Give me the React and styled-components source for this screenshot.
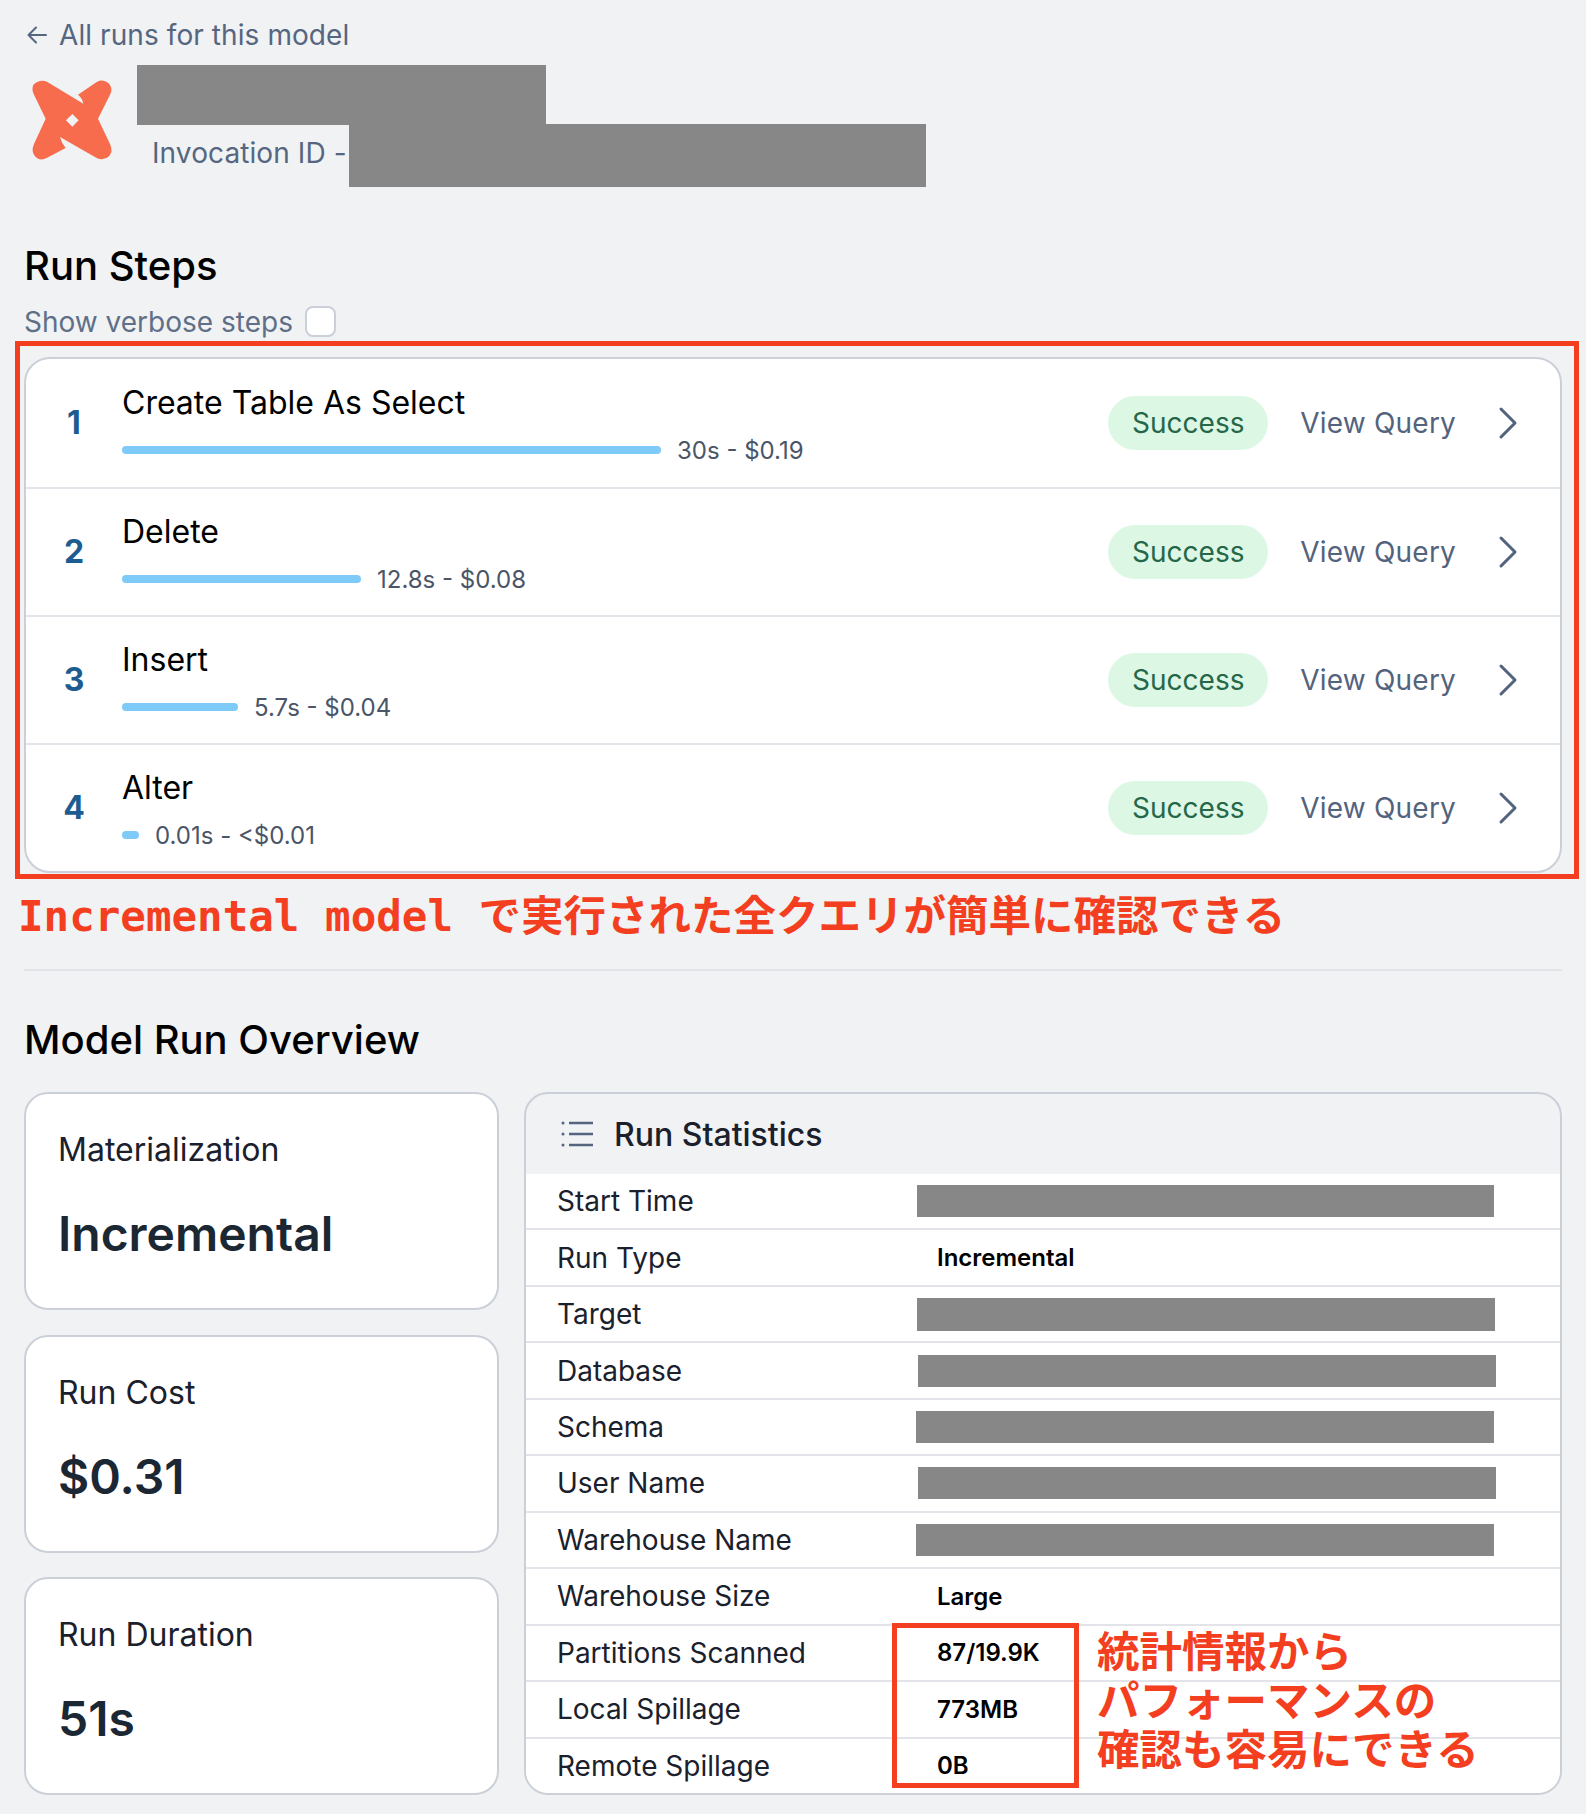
import styled, { createGlobalStyle } from "styled-components"
import { ChevronRight } from "lucide-react"

const GlobalStyle = createGlobalStyle`
    * { box-sizing: border-box; }
    body {
        margin: 0;
        background: #f0f2f4;
        font-family: "Inter", "Noto Sans CJK JP", sans-serif;
    }
`
const Page = styled.div`
    width: 1586px;
    height: 1814px;
    padding: 18px 24px 0 24px;
    background: #f0f2f4;
`
const BackLink = styled.a`
    display: flex;
    align-items: center;
    gap: 12px;
    height: 34px;
    padding-left: 3px;
    font-size: 28px;
    line-height: 34px;
    letter-spacing: 0.08px;
    color: #566680;
`
const Header = styled.div`
    display: flex;
    gap: 17px;
    margin-top: 13px;
`
const LogoMark = styled.svg`
    flex: none;
    width: 96px;
    height: 96px;
    margin-top: 7px;
    fill: #f76c4d;
`
const HeaderText = styled.div`
    display: flex;
    flex-direction: column;
`
const Redact = styled.div`
    flex: none;
    background: #878787;
    width: ${(props) => props.$w}px;
    height: ${(props) => props.$h}px;
    margin-left: ${(props) => props.$x || 0}px;
`
const InvocationRow = styled.div`
    display: flex;
    align-items: center;
    margin-top: -1px;
`
const Invocation = styled.span`
    width: 212px;
    margin-top: -5px;
    padding-left: 15px;
    font-size: 28px;
    letter-spacing: 0.1px;
    white-space: nowrap;
    color: #566680;
`
const SectionTitle = styled.h2`
    margin: ${(props) => props.$top}px 0 0;
    font-size: 40px;
    line-height: 44px;
    font-weight: 500;
    color: #000;
`
const VerboseRow = styled.label`
    display: flex;
    align-items: center;
    gap: 13px;
    height: 31px;
    margin-top: 18px;
    font-size: 28px;
    color: #5f6f88;
`
const CheckBox = styled.span`
    width: 31px;
    height: 31px;
    margin-left: -1px;
    background: #fff;
    border: 2px solid #cbd0d8;
    border-radius: 8px;
`
const StepsWrap = styled.div`
    position: relative;
    margin-top: 20px;
`
const RedBox = styled.div`
    position: absolute;
    border: 5px solid #f33f1f;
    top: ${(props) => props.$top}px;
    left: ${(props) => props.$left}px;
    right: ${(props) => props.$right}px;
    bottom: ${(props) => props.$bottom}px;
`
const StepsCard = styled.div`
    background: #fff;
    border: 2px solid #cbd0d8;
    border-radius: 26px;
    overflow: hidden;
`
const StepRow = styled.div`
    display: flex;
    align-items: center;
    height: 128px;
    padding-bottom: 1px;
    border-bottom: 2px solid #e2e4ea;
    &:first-child { height: 130px; }
    &:last-child { height: 126px; border-bottom: none; }
`
const StepNumber = styled.div`
    flex: none;
    width: 96px;
    text-align: center;
    font-size: 32px;
    font-weight: 700;
    color: #1d5c91;
`
const StepMain = styled.div`
    flex: 1;
    min-width: 0;
    padding-top: 4px;
`
const StepName = styled.div`
    font-size: 32px;
    line-height: 40px;
    color: #000;
`
const StepMeta = styled.div`
    display: flex;
    align-items: center;
    gap: 16px;
    height: 32px;
    margin-top: 11px;
    font-size: 24px;
    color: #4a5568;
`
const Bar = styled.div`
    height: 8px;
    border-radius: 4px;
    background: #7ecaf8;
`
const Badge = styled.span`
    display: flex;
    align-items: center;
    justify-content: center;
    width: 160px;
    height: 54px;
    border-radius: 27px;
    background: #dcf8e5;
    color: #276749;
    font-size: 28px;
`
const ViewQuery = styled.span`
    margin-left: 32px;
    font-size: 28px;
    letter-spacing: 0.2px;
    color: #53637d;
`
const Chevron = styled(ChevronRight)`
    flex: none;
    width: 56px;
    height: 56px;
    margin: 0 24px;
    color: #53637d;
`
const Note = styled.div`
    margin: 19px 0 0 -6px;
    font-size: 42.5px;
    line-height: 50px;
    font-weight: 700;
    white-space: pre;
    color: #f33f1f;
    font-family: "DejaVu Sans Mono", "Noto Sans CJK JP", monospace;
`
const Divider = styled.hr`
    margin: 27px 0 0;
    border: none;
    height: 2px;
    background: #e2e4ea;
`
const Overview = styled.div`
    display: grid;
    grid-template-columns: 475px 1fr;
    gap: 25px;
    height: 703px;
    margin-top: 30px;
`
const SmallCards = styled.div`
    display: grid;
    grid-template-rows: repeat(3, 218px);
    gap: 24.5px;
`
const SmallCard = styled.div`
    padding: 36px 32px 0;
    background: #fff;
    border: 2px solid #cbd0d8;
    border-radius: 24px;
`
const CardLabel = styled.div`
    font-size: 32px;
    line-height: 40px;
    color: #1a202c;
`
const CardValue = styled.div`
    margin-top: 36px;
    font-size: 48px;
    line-height: 56px;
    font-weight: 600;
    color: #1b2733;
`
const StatsCard = styled.div`
    position: relative;
    display: flex;
    flex-direction: column;
    border: 2px solid #cbd0d8;
    border-radius: 24px;
    overflow: hidden;
`
const StatsHeader = styled.div`
    flex: none;
    display: flex;
    align-items: center;
    gap: 20px;
    height: 80px;
    padding-left: 34px;
    font-size: 32px;
    font-weight: 500;
    color: #1a202c;
`
const ListMark = styled.svg`
    flex: none;
    width: 34px;
    height: 26px;
    stroke: #56657f;
    stroke-width: 2.6;
    fill: none;
`
const StatsBody = styled.div`
    flex: 1;
    display: flex;
    flex-direction: column;
    background: #fff;
`
const StatRow = styled.div`
    flex: 1;
    display: grid;
    grid-template-columns: 391px 1fr;
    align-items: center;
    border-bottom: 2px solid #e2e4ea;
    &:last-child { border-bottom: none; }
`
const StatLabel = styled.div`
    padding-left: 31px;
    font-size: 28px;
    color: #1a202c;
`
const StatValue = styled.div`
    padding-left: 20px;
    font-size: 24px;
    font-weight: 600;
    color: #000;
`
const StatsNote = styled.div`
    position: absolute;
    left: 571px;
    top: 530px;
    font-size: 42.5px;
    line-height: 49px;
    font-weight: 700;
    white-space: pre;
    color: #f33f1f;
    font-family: "Noto Sans CJK JP", sans-serif;
`
const StatsRedBox = styled.div`
    position: absolute;
    left: 366px;
    top: 529px;
    width: 187px;
    height: 165px;
    border: 5px solid #f33f1f;
`

const steps = [
    { name: "Create Table As Select", bar: 539, meta: "30s - $0.19" },
    { name: "Delete", bar: 239, meta: "12.8s - $0.08" },
    { name: "Insert", bar: 116, meta: "5.7s - $0.04" },
    { name: "Alter", bar: 17, meta: "0.01s - <$0.01" },
]

const cards = [
    { label: "Materialization", value: "Incremental" },
    { label: "Run Cost", value: "$0.31" },
    { label: "Run Duration", value: "51s" },
]

const stats = [
    { label: "Start Time", redact: { w: 577, h: 32 } },
    { label: "Run Type", value: "Incremental" },
    { label: "Target", redact: { w: 578, h: 33 } },
    { label: "Database", redact: { w: 578, h: 32, x: 1 } },
    { label: "Schema", redact: { w: 578, h: 32, x: -1 } },
    { label: "User Name", redact: { w: 578, h: 32, x: 1 } },
    { label: "Warehouse Name", redact: { w: 578, h: 32, x: -1 } },
    { label: "Warehouse Size", value: "Large" },
    { label: "Partitions Scanned", value: "87/19.9K" },
    { label: "Local Spillage", value: "773MB" },
    { label: "Remote Spillage", value: "0B" },
]

function BackArrow() {
    return (
        <svg width="20" height="18" viewBox="0 0 20 18" fill="none" stroke="#566680" strokeWidth="2" strokeLinecap="round" strokeLinejoin="round">
            <path d="M19 9H1.5M9 1.5L1.5 9L9 16.5" />
        </svg>
    )
}

function Logo() {
    return (
        <LogoMark viewBox="0 0 288 288">
            <path
                fillRule="evenodd"
                d="M28 38Q22 52 30 68L65 140L30 216Q20 238 34 254Q48 268 68 258L125 228Q112 212 108 195L218 258Q240 268 256 252Q268 238 258 216L222 140L258 68Q268 50 254 34Q238 20 218 30L162 68Q176 80 178 95L70 30Q48 20 28 38ZM145 126L164 145L145 164L126 145Z"
            />
        </LogoMark>
    )
}

function ListIcon() {
    return (
        <ListMark viewBox="0 0 34 26">
            <path d="M9 2H33M9 13H33M9 24H33" />
            <path strokeLinecap="round" strokeWidth="3" d="M3 2h.01M3 13h.01M3 24h.01" />
        </ListMark>
    )
}

export default function App() {
    return (
        <Page>
            <GlobalStyle />
            <BackLink>
                <BackArrow />
                All runs for this model
            </BackLink>
            <Header>
                <Logo />
                <HeaderText>
                    <Redact $w={409} $h={60} />
                    <InvocationRow>
                        <Invocation>Invocation ID -</Invocation>
                        <Redact $w={577} $h={63} />
                    </InvocationRow>
                </HeaderText>
            </Header>

            <SectionTitle $top={57}>Run Steps</SectionTitle>
            <VerboseRow>
                Show verbose steps
                <CheckBox />
            </VerboseRow>
            <StepsWrap>
                <StepsCard>
                    {steps.map((step, i) => (
                        <StepRow key={step.name}>
                            <StepNumber>{i + 1}</StepNumber>
                            <StepMain>
                                <StepName>{step.name}</StepName>
                                <StepMeta>
                                    <Bar style={{ width: step.bar }} />
                                    {step.meta}
                                </StepMeta>
                            </StepMain>
                            <Badge>Success</Badge>
                            <ViewQuery>View Query</ViewQuery>
                            <Chevron strokeWidth={1.3} />
                        </StepRow>
                    ))}
                </StepsCard>
                <RedBox $top={-16} $left={-9} $right={-17} $bottom={-6} />
            </StepsWrap>
            <Note>Incremental model で実行された全クエリが簡単に確認できる</Note>
            <Divider />

            <SectionTitle $top={47}>Model Run Overview</SectionTitle>
            <Overview>
                <SmallCards>
                    {cards.map((card) => (
                        <SmallCard key={card.label}>
                            <CardLabel>{card.label}</CardLabel>
                            <CardValue>{card.value}</CardValue>
                        </SmallCard>
                    ))}
                </SmallCards>
                <StatsCard>
                    <StatsHeader>
                        <ListIcon />
                        Run Statistics
                    </StatsHeader>
                    <StatsBody>
                        {stats.map((stat) => (
                            <StatRow key={stat.label}>
                                <StatLabel>{stat.label}</StatLabel>
                                {stat.redact ? (
                                    <Redact $w={stat.redact.w} $h={stat.redact.h} $x={stat.redact.x} />
                                ) : (
                                    <StatValue>{stat.value}</StatValue>
                                )}
                            </StatRow>
                        ))}
                    </StatsBody>
                    <StatsRedBox />
                    <StatsNote>{"統計情報から\nパフォーマンスの\n確認も容易にできる"}</StatsNote>
                </StatsCard>
            </Overview>
        </Page>
    )
}
